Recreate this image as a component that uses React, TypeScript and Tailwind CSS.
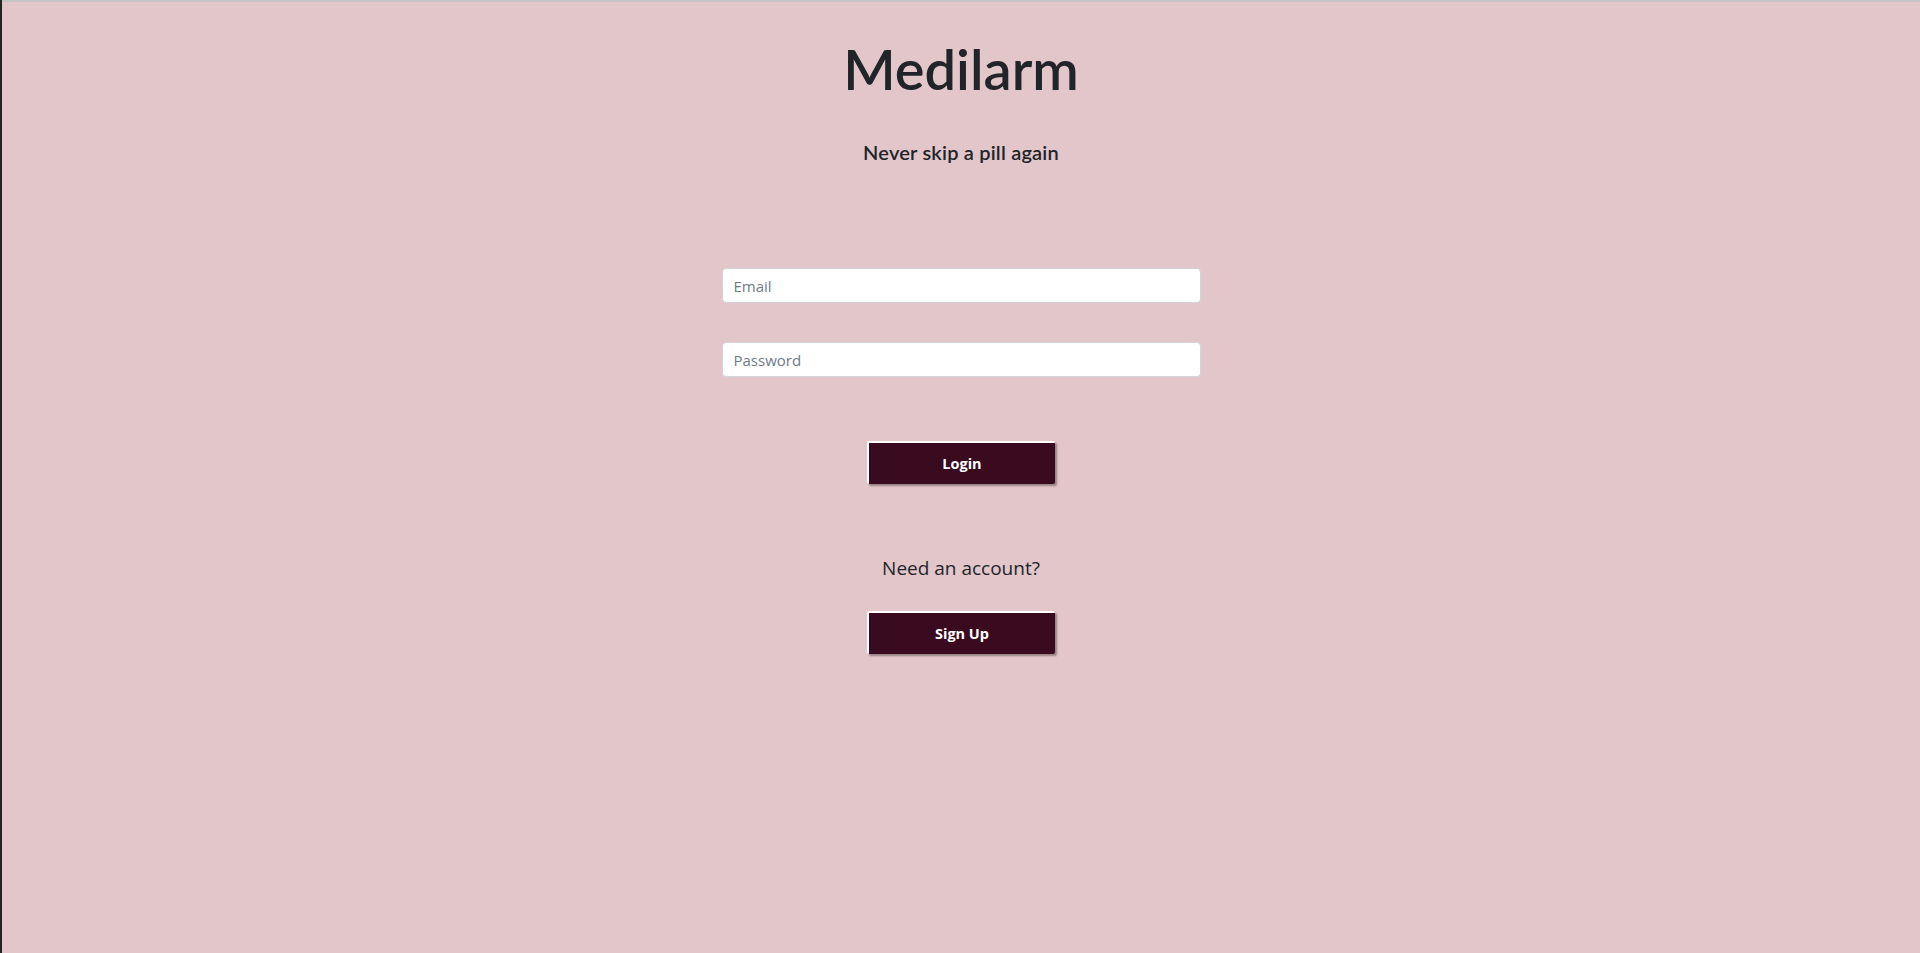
import { useState } from "react";

export default function App() {
  const [email, setEmail] = useState("");
  const [password, setPassword] = useState("");

  const btn =
    "w-[188px] h-[43px] bg-[#3a0a1e] text-white text-[14.5px] font-bold border-t-2 border-l-2 border-white shadow-[2px_2px_2px_rgba(0,0,0,0.35)] rounded-[2px] font-['Open_Sans',sans-serif]";

  const field =
    "w-[479px] h-[35px] px-[11px] bg-white border border-[#ced4da] rounded-[4px] text-[15px] text-[#495057] placeholder:text-[#6c7a8a] font-['Open_Sans',sans-serif] outline-none";

  return (
    <div className="min-h-screen bg-[#242424] pl-[2px]">
      <div className="min-h-screen bg-[#e2c6c9] border-t-2 border-[#c4c4c4] flex flex-col items-center">
        {/* Header */}
        <h1 className="mt-[33px] text-[56px] leading-[1.2] text-[#212529] font-['Lato',sans-serif] font-semibold">
          Medilarm
        </h1>
        <p className="mt-[38px] text-[20px] leading-[1.2] tracking-[0.2px] text-[#212529] font-['Lato',sans-serif] font-semibold">
          Never skip a pill again
        </p>

        {/* Form */}
        <form
          className="mt-[104px] flex flex-col items-center"
          onSubmit={(e) => e.preventDefault()}
        >
          <input
            type="email"
            value={email}
            onChange={(e) => setEmail(e.target.value)}
            placeholder="Email"
            className={field}
          />
          <input
            type="password"
            value={password}
            onChange={(e) => setPassword(e.target.value)}
            placeholder="Password"
            className={`mt-[39px] ${field}`}
          />
          <button type="submit" className={`mt-[64px] ${btn}`}>
            Login
          </button>
        </form>

        <p className="mt-[69px] text-[19px] leading-[30px] text-[#212529] font-['Open_Sans',sans-serif]">
          Need an account?
        </p>
        <button type="button" className={`mt-[28px] ${btn}`}>
          Sign Up
        </button>
      </div>
    </div>
  );
}
